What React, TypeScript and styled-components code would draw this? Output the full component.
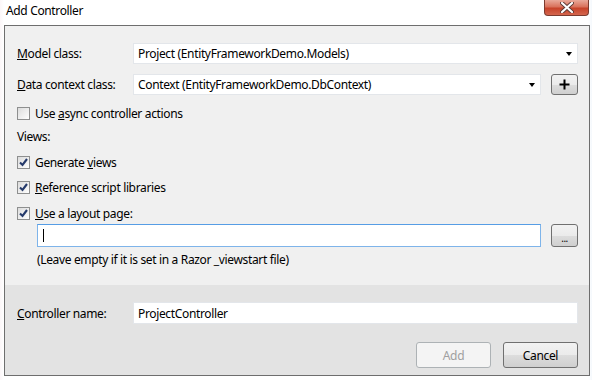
import React from 'react';
import styled, { createGlobalStyle } from 'styled-components';

const GlobalStyle = createGlobalStyle`
  html, body {
    margin: 0;
    padding: 0;
    background: #ffffff;
  }
`;

const Window = styled.div`
  width: 592px;
  height: 380px;
  background: linear-gradient(90deg, #fbf6f8 0px, #ffffff 4px, #ffffff 588px, #f4f8fc 592px);
  font-family: "Segoe UI", "Noto Sans", sans-serif;
  font-size: 12px;
  letter-spacing: -0.35px;
  color: #000;
  display: flex;
  flex-direction: column;
  overflow: hidden;
`;

const TitleBar = styled.div`
  height: 25px;
  display: flex;
  align-items: flex-start;
  justify-content: space-between;
  padding-left: 6px;
  padding-right: 3px;
`;

const Title = styled.div`
  margin-top: 2px;
  line-height: 17px;
`;

const CloseButton = styled.div`
  width: 45px;
  height: 16px;
  box-sizing: border-box;
  border: 1px solid #7c3b2f;
  border-top: none;
  border-radius: 0 0 4px 4px;
  background: linear-gradient(180deg, #e9a99a 0%, #d9725c 45%, #c7432a 55%, #d4664e 100%);
  display: flex;
  align-items: center;
  justify-content: center;
`;

const Frame = styled.div`
  margin-left: 4px;
  width: 586px;
  height: 351px;
  box-sizing: border-box;
  border: 1px solid #6e6e6e;
  display: flex;
  flex-direction: column;
`;

const Content = styled.div`
  background: #f0f0f0;
  height: 259px;
  padding: 17px 11px 0 12px;
  box-sizing: border-box;
  display: flex;
  flex-direction: column;
`;

const Footer = styled.div`
  flex: 1;
  background: #e3e3e3;
  padding: 17px 11px 0 12px;
  display: flex;
  flex-direction: column;
`;

const FieldRow = styled.div<{ $top?: number }>`
  display: flex;
  align-items: center;
  margin-top: ${(p) => p.$top ?? 0}px;
`;

const Label = styled.div`
  width: 116px;
  white-space: nowrap;
`;

const Key = styled.span`
  text-decoration: underline;
`;

const Field = styled.div<{ $h?: number; $focus?: boolean }>`
  flex: 1;
  height: ${(p) => p.$h ?? 21}px;
  box-sizing: border-box;
  background: #fff;
  border: 1px solid ${(p) => (p.$focus ? '#7eb4ea' : '#e3e6ea')};
  border-top-color: ${(p) => (p.$focus ? '#569de5' : '#e3e6ea')};
  display: flex;
  align-items: center;
  padding-left: 4px;
  white-space: nowrap;
`;

const FieldText = styled.span`
  flex: 1;
`;

const Arrow = styled.span`
  width: 0;
  height: 0;
  border-left: 3.5px solid transparent;
  border-right: 3.5px solid transparent;
  border-top: 4px solid #000;
  margin-right: 5px;
`;

const Caret = styled.span`
  width: 1px;
  height: 13px;
  background: #000;
  margin-left: 1px;
`;

const SmallButton = styled.div<{ $h?: number }>`
  width: 27px;
  height: ${(p) => p.$h ?? 21}px;
  margin-left: 10px;
  box-sizing: border-box;
  border: 1px solid #707070;
  border-radius: 3px;
  background: linear-gradient(180deg, #f2f2f2 0%, #ebebeb 50%, #dddddd 51%, #cfcfcf 100%);
  display: flex;
  align-items: center;
  justify-content: center;
`;

const Dots = styled.span`
  font-size: 10px;
  line-height: 10px;
  margin-top: 4px;
  letter-spacing: -0.5px;
`;

const CheckRow = styled.div<{ $top: number }>`
  display: flex;
  align-items: center;
  height: 18px;
  margin-top: ${(p) => p.$top}px;
  white-space: nowrap;
`;

const Box = styled.div`
  width: 13px;
  height: 13px;
  box-sizing: border-box;
  border: 1px solid #8e8f8f;
  background: linear-gradient(135deg, #dcdcdc 0%, #f4f4f4 70%, #ffffff 100%);
  margin-right: 5px;
  display: flex;
  align-items: center;
  justify-content: center;
`;

const SectionLabel = styled.div<{ $top: number }>`
  height: 18px;
  line-height: 18px;
  margin-top: ${(p) => p.$top}px;
`;

const Indented = styled.div<{ $top: number }>`
  display: flex;
  align-items: center;
  margin-top: ${(p) => p.$top}px;
  padding-left: 20px;
`;

const Note = styled.div`
  height: 18px;
  line-height: 18px;
  margin-top: 4px;
  padding-left: 20px;
`;

const Buttons = styled.div`
  display: flex;
  justify-content: flex-end;
  gap: 12px;
  margin-top: 18px;
`;

const DialogButton = styled.div<{ $disabled?: boolean }>`
  width: 75px;
  height: 26px;
  box-sizing: border-box;
  border-radius: 3px;
  border: 1px solid ${(p) => (p.$disabled ? '#adb2b5' : '#707070')};
  color: ${(p) => (p.$disabled ? '#a0a0a0' : '#000')};
  background: ${(p) =>
    p.$disabled
      ? '#f4f4f4'
      : 'linear-gradient(180deg, #f2f2f2 0%, #ebebeb 50%, #dddddd 51%, #cfcfcf 100%)'};
  display: flex;
  align-items: center;
  justify-content: center;
`;

const Check = () => (
  <svg width="9" height="9" viewBox="0 0 9 9">
    <path d="M1 4.5 L3.5 7 L8 1" fill="none" stroke="#253a6b" strokeWidth="2.1" />
  </svg>
);

const CheckOption: React.FC<{ top: number; checked?: boolean; children: React.ReactNode }> = ({
  top,
  checked,
  children,
}) => (
  <CheckRow $top={top}>
    <Box>{checked && <Check />}</Box>
    <span>{children}</span>
  </CheckRow>
);

export default function App() {
  return (
    <>
      <GlobalStyle />
      <Window>
        <TitleBar>
          <Title>Add Controller</Title>
          <CloseButton>
            <svg width="14" height="11" viewBox="0 0 14 11">
              <path
                d="M2 1 L12 10 M12 1 L2 10"
                stroke="#5a3a36"
                strokeWidth="4"
                strokeLinecap="round"
              />
              <path
                d="M2 1 L12 10 M12 1 L2 10"
                stroke="#ffffff"
                strokeWidth="2.2"
                strokeLinecap="round"
              />
            </svg>
          </CloseButton>
        </TitleBar>
        <Frame>
          <Content>
            <FieldRow>
              <Label>
                <Key>M</Key>odel class:
              </Label>
              <Field>
                <FieldText>Project (EntityFrameworkDemo.Models)</FieldText>
                <Arrow />
              </Field>
            </FieldRow>
            <FieldRow $top={10}>
              <Label>
                <Key>D</Key>ata context class:
              </Label>
              <Field>
                <FieldText>Context (EntityFrameworkDemo.DbContext)</FieldText>
                <Arrow />
              </Field>
              <SmallButton>
                <svg width="11" height="11" viewBox="0 0 11 11">
                  <path d="M5.5 0.5 V10.5 M0.5 5.5 H10.5" stroke="#000" strokeWidth="2" />
                </svg>
              </SmallButton>
            </FieldRow>
            <CheckOption top={9}>
              Use <Key>a</Key>sync controller actions
            </CheckOption>
            <SectionLabel $top={6}>Views:</SectionLabel>
            <CheckOption top={7} checked>
              Generate <Key>v</Key>iews
            </CheckOption>
            <CheckOption top={7} checked>
              <Key>R</Key>eference script libraries
            </CheckOption>
            <CheckOption top={8} checked>
              <Key>U</Key>se a layout page:
            </CheckOption>
            <Indented $top={2}>
              <Field $h={23} $focus>
                <Caret />
              </Field>
              <SmallButton $h={23}>
                <Dots>...</Dots>
              </SmallButton>
            </Indented>
            <Note>(Leave empty if it is set in a Razor _viewstart file)</Note>
          </Content>
          <Footer>
            <FieldRow>
              <Label>
                <Key>C</Key>ontroller name:
              </Label>
              <Field $h={22}>
                <FieldText>ProjectController</FieldText>
              </Field>
            </FieldRow>
            <Buttons>
              <DialogButton $disabled>Add</DialogButton>
              <DialogButton>Cancel</DialogButton>
            </Buttons>
          </Footer>
        </Frame>
      </Window>
    </>
  );
}
